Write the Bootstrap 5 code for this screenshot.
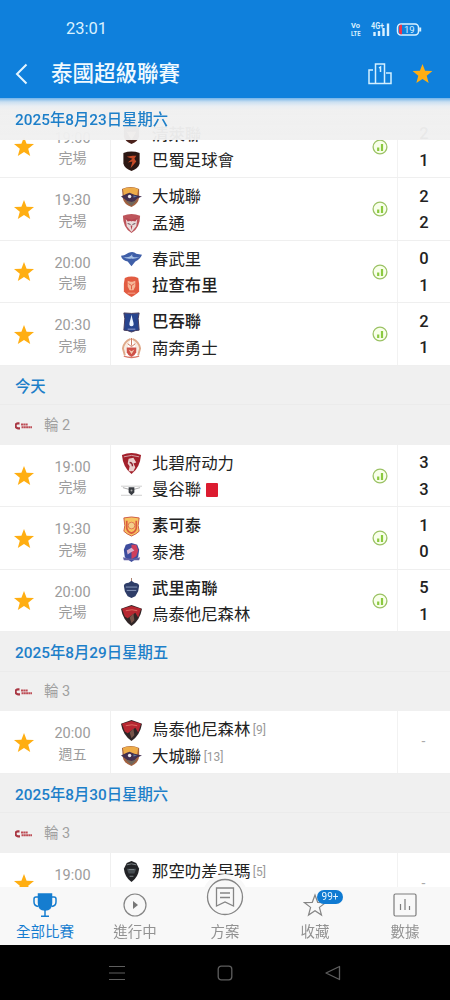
<!DOCTYPE html>
<html lang="zh-Hant">
<head>
    <meta charset="UTF-8">
    <meta name="viewport" content="width=device-width, initial-scale=1.0">
    <title>泰國超級聯賽</title>
    <link href="https://cdn.jsdelivr.net/npm/bootstrap@5.3.0/dist/css/bootstrap.min.css" rel="stylesheet">
    <style>
        body {
            font-family: Roboto, "Noto Sans CJK TC", sans-serif;
            background-color: #fff;
            color: #222;
        }
        svg { display: block; flex: none; }
        .app { height: 1000px; width: 450px; overflow: hidden; }
        .top-bar { height: 98px; background-color: #0f80dc; flex: none; }
        .status { height: 57px; padding: 2px 28px 0 66px; font-size: 16.5px; color: #d9f1ff; }
        .title-row { height: 33px; padding: 0 17px 0 15px; }
        .title-row h1 { font-size: 21.5px; font-weight: 500; line-height: 32px; margin: 0 auto 0 23px; color: #f1faff; }
        .podium { margin-right: 20px; }
        .matches { flex: 1 1 0; min-height: 0; overflow: hidden; }
        .day { height: 39.5px; line-height: 38.5px; padding: 2px 0 0 15px; font-size: 15.35px; font-weight: 500; color: #1d7fc9; background-color: #f0f0f0; border-bottom: 1px solid #ebebeb; }
        .day.pinned { top: 0; z-index: 2; height: 42px; line-height: 41px; border: 0;
            background: linear-gradient(#73b3e9 0, #cbe0f1 4px, #e9eef3 8px, #f0f0f0f8 12px, #f0f0f0f5 100%); }
        .round { height: 39.5px; padding: 2px 0 0 15px; font-size: 14.5px; color: #a0a0a0; background-color: #f0f0f0; }
        .match { height: 62.5px; border-bottom: 1px solid #efefef; background-color: #fff; }
        .pinned + .match { margin-top: -24.5px; }
        .fav { width: 48px; padding-top: 2px; }
        .kickoff { width: 63px; padding: 12px 13px 0 0; border-right: 1px solid #f0f0f0; font-size: 14.5px; line-height: 21px; color: #9c9c9c; text-align: center; white-space: nowrap; }
        .kickoff span { display: block; height: 20.5px; }
        .kickoff span + span { font-size: 14px; line-height: 20px; }
        .teams { padding: 6px 0 0 9.5px; font-size: 16.4px; }
        .team { height: 26.5px; line-height: 26px; gap: 10.5px; white-space: nowrap; }
        .team b { font-weight: 500; }
        .rank { font-size: 12px; color: #999; margin-left: -8px; }
        .red-card { width: 12px; height: 14px; background-color: #dc1c30; border-radius: 1px; margin-left: -5.5px; }
        .stat { width: 34px; padding-top: 1px; }
        .score { width: 53px; border-left: 1px solid #f2f2f2; font-size: 16.5px; font-weight: 500; line-height: 26.5px; text-align: center; padding-top: 5.5px; }
        .score.none { color: #aaa; font-weight: 400; font-size: 14px; line-height: 8px; padding-top: 26px; padding-right: 1px; }
        .tabs { height: 58px; background-color: #f8f8f8; font-size: 14.5px; color: #929292; z-index: 3; flex: none; }
        .tab { padding-top: 6px; line-height: 20px; }
        .tab svg { margin-bottom: 6px; }
        .tab.current { color: #157dd0; }
        .tab-plan { margin-top: -14px; padding-top: 0; }
        .tab-plan svg { margin-bottom: 2px; }
        .count { left: 47px; top: 3px; width: 26px; height: 14px; line-height: 14px; font-size: 10px; border-radius: 7px; background-color: #0f7ad2; color: #e9f6ff; }
        .sys-nav { height: 55px; background-color: #000; padding: 0 109px; flex: none; }
    </style>
</head>
<body>

    <svg width="0" height="0" class="position-absolute">
        <symbol id="star" viewBox="0 0 20 20"><path fill="#ffae12" d="M10 0l2.600 6.800 7.400.300-5.800 4.600 2 7.300L10 14.900 3.800 19l2-7.300L0 7.100l7.400-.3z"/></symbol>
        <symbol id="stat" viewBox="0 0 16 16"><circle cx="8" cy="8" r="6.900" fill="#f8ffea" stroke="#9bc265" stroke-width="1.300"/><path d="M6.200 12V8.500M10 12V5" stroke="#8bc940" stroke-width="2.200"/></symbol>
        <symbol id="league" viewBox="0 0 17 8"><path d="M4.500 1.300H3a2.300 2.300 0 0 0 0 5h2" fill="none" stroke="#a93743" stroke-width="2.200"/><path d="M6 2.600h7M6.500 5.300H17" stroke="#bd4d56" stroke-width="2" stroke-dasharray="2 .3"/></symbol>

        <!-- club crests -->
        <symbol id="bashu" viewBox="0 0 22 22"><path d="M2.500 2q8.500-3 17 0v11q-1 5-8.500 8-7.500-3-8.500-8z" fill="#2c1713"/><path d="M16 5l-4 0-6 1 6 2-5 4 5-1-2 7 6-7-2-3z" fill="#c54a27"/></symbol>
        <symbol id="grey" viewBox="0 0 22 22"><path d="M3 2h16v11q-1 5-8 8-7-3-8-8z" fill="#4a211b"/><path d="M6 8h10l-5 9z" fill="#d5af91"/></symbol>
        <symbol id="ayutthaya" viewBox="0 0 22 22"><path d="M1 2q9-4 18 0v9q-1 7-8 10-8-3-9-9z" fill="#a4613f"/><path d="M2 2q8-3 16 0l-1 7H3z" fill="#eeac49"/><path d="M0 10l6-3 3-1 5 2 8 2-5 2-4 4-6-1z" fill="#433050"/><circle cx="9" cy="10" r="1.800" fill="#efe9ef"/><path d="M13 9l4 1-4 1z" fill="#567ca9"/><path d="M4 14l6 2 7-2-6 6z" fill="#70665b"/></symbol>
        <symbol id="muangthong" viewBox="0 0 22 22"><path d="M2 3q9-4 18 0 0 13-9 18Q2 16 2 3z" fill="#bd555b"/><path d="M5 6l6 3 6-3-1 8-5 6-5-6z" fill="#eadbdb"/><path d="M4 5l7 2 7-2-3 4-4-1-4 1zM10 13l1 5 1-5z" fill="#b64550"/><path d="M7 11l3 1M15 11l-3 1" stroke="#5e4451"/></symbol>
        <symbol id="chonburi" viewBox="0 0 22 22"><path d="M0 7q4 0 8-3 5-2 8 1l6 1q-2 5-7 7l-4 5-4-5Q1 12 0 7z" fill="#3f5fa8"/><path d="M2 8q7 2 10-3-2 5 8 3-6 3-9 2-5 1-9-2z" fill="#a9c2e5"/></symbol>
        <symbol id="ratchaburi" viewBox="0 0 22 22"><path d="M4 2q7-3 14 0l1 6v8q-2 3-8 6-6-3-8-6V8z" fill="#e25c42"/><path d="M7 5l3 1h2l3-1v6l-2 4H9l-2-4z" fill="#f6b798"/><path d="M8 8l3 2 3-2M11 10v4" stroke="#dd5c42" fill="none"/><path d="M7 18h8" stroke="#f4a78f"/></symbol>
        <symbol id="pathum" viewBox="0 0 22 22"><path d="M3 1q8 1 16 0l-1 6 1 12q-4 0-8 2-4-2-8-2L4 7z" fill="#27448e" stroke="#453a59"/><path d="M11 3q1 5 2 8 1 4-2 4t-2-4q1-3 2-8z" fill="#edf4ff"/><path d="M7 18h8" stroke="#8490c4" stroke-width="1.200"/></symbol>
        <symbol id="nakhonpathom" viewBox="0 0 22 22"><path d="M10 1Q3 4 2 11l2 7M12 1q7 3 8 10l-2 7" stroke="#dfa98a" stroke-width="2" fill="#f8ece2"/><path d="M11 0v8M7 6l4 3 4-3" stroke="#cb7358" fill="none"/><path d="M6 10h10v5q-1 3-5 5-4-2-5-5z" fill="#cf5148"/><path d="M8 12l3 2 3-2-3 5z" fill="#f5c9af"/><path d="M3 19q8 3 16 0" fill="none" stroke="#d97868" stroke-width="1.500"/></symbol>
        <symbol id="kanchanaburi" viewBox="0 0 22 22"><path d="M1 2q10-4 20 0-1 13-10 20Q2 15 1 2z" fill="#a3202b"/><path d="M3 4q8-3 16 0" stroke="#d6a7a9" fill="none"/><path d="M8 6l5-1 3 5-3 1 2 4-2 4H8l1-5-2-3z" fill="#ead0ce"/><path d="M9 10q3 0 3 4" stroke="#8d2330" fill="none" stroke-width="1.500"/></symbol>
        <symbol id="bangkok" viewBox="0 0 22 22"><path d="M0 6.500h22M0 16h22" stroke="#ccc"/><path d="M2 8l7 2h4l7-2" stroke="#aaa" fill="none"/><path d="M8 7.500h6V13l-3 3-3-3z" fill="#393c42"/><circle cx="11" cy="11" r="1" fill="#aaa"/></symbol>
        <symbol id="sukhothai" viewBox="0 0 22 22"><path d="M3 2q8-2 16 0l-1 8 1 6q-3 3-8 5-5-2-8-5l1-6z" fill="#f7c462" stroke="#ce5a42"/><path d="M6 5v8q1 4 5 5 4-1 5-5V5" stroke="#dc5b40" stroke-width="1.800" fill="none"/><circle cx="11" cy="10" r="3.500" fill="#f4cf8b" stroke="#df7650"/></symbol>
        <symbol id="port" viewBox="0 0 22 22"><path d="M5 3l6-2 6 2 2 5-1 8-7 5-7-5-1-8z" fill="#3d4c9d"/><path d="M11 3h5l2 6-2 6-5 3z" fill="#cf3f5c"/><path d="M6 9l5-3 3 3-4 2-3 2z" fill="#d8b2cb"/><path d="M2 16q9 3 18 0l-1 3H3z" fill="#6261a4"/></symbol>
        <symbol id="buriram" viewBox="0 0 22 22"><path d="M11 0v5" stroke="#a87c69"/><path d="M3 8q1-3 5-3l3-2 3 2q4 0 5 3l-1 6-3 5-4 2-4-2-3-5z" fill="#2e3d68"/><path d="M5 9.500h12M6 13h10" stroke="#8b9abd"/></symbol>
        <symbol id="uthai" viewBox="0 0 22 22"><path d="M0 4l11-4 11 4q-2 12-11 18Q2 16 0 4z" fill="#302526"/><path d="M1 4l10-3 10 3-3 9-3-5-8 6-3-2z" fill="#b62731"/><path d="M5 6q7-2 12 0" stroke="#dc6d63" fill="none"/><path d="M9 13l4-4 1 7-3 3z" fill="#765348"/></symbol>
        <symbol id="korat" viewBox="0 0 22 22"><path d="M6 2l5-2 5 2 3 6q-1 9-8 14Q4 17 3 8z" fill="#222326"/><path d="M6 8h10l-2 5H8z" fill="#464d52"/><path d="M8 9h6M6 4q5-2 10 0M9 16h4" stroke="#80888c" fill="none"/></symbol>
    </svg>

    <div class="app d-flex flex-column">
        <header class="top-bar">
            <div class="status d-flex align-items-center">
                <span class="me-auto">23:01</span>
                <svg width="72" height="18" viewBox="0 -1 72 18" fill="#d9f1ff" font-family="Roboto" font-weight="700">
                    <text x="1" y="6" font-size="6.500" textLength="9" lengthAdjust="spacingAndGlyphs">Vo</text>
                    <text x="1" y="14" font-size="6.500" textLength="9.500" lengthAdjust="spacingAndGlyphs">LTE</text>
                    <text x="21" y="6.500" font-size="8.500" textLength="13" lengthAdjust="spacingAndGlyphs">4G+</text>
                    <path d="M24.500 14v-4M29 14V9M33.500 14V6M38 14V1.500" stroke="#d9f1ff" stroke-width="2.400"/>
                    <rect x="47.500" y="2" width="21" height="11" rx="3.500" fill="none" stroke="#d9f1ff" stroke-width="1.500"/>
                    <path d="M49.500 4.500q0-1.500 2-1.500v9q-2 0-2-1.500z" fill="#ee3448" stroke="#ee3448"/>
                    <path d="M70.200 5.500v4" stroke="#d9f1ff" stroke-width="2"/>
                    <text x="54" y="11" font-size="9.500" font-weight="400">19</text>
                </svg>
            </div>
            <div class="title-row d-flex align-items-center">
                <svg width="13" height="22" viewBox="0 0 13 22"><path d="M11.500 1.500L2 11l9.500 9.500" fill="none" stroke="#e4f5ff" stroke-width="2"/></svg>
                <h1>泰國超級聯賽</h1>
                <svg class="podium" width="24" height="22" viewBox="0 0 24 22" fill="none" stroke="#d3efff" stroke-width="1.500"><path d="M5 7H1v13.500h22V10h-5M7.500 20.500V1h9v19.500M11 5l1.500-1v5"/></svg>
                <svg width="21" height="20" viewBox="0 0 20 20"><use href="#star"/></svg>
            </div>
        </header>

        <main class="matches">
            <div class="day pinned position-sticky">2025年8月23日星期六</div>
            <div class="match d-flex">
                <div class="fav d-flex justify-content-center align-items-center"><svg width="20" height="20"><use href="#star"/></svg></div>
                <div class="kickoff"><span>19:00</span><span>完場</span></div>
                <div class="teams flex-grow-1">
                    <div class="team d-flex align-items-center"><svg width="21" height="21"><use href="#grey"/></svg><b>清萊聯</b></div>
                    <div class="team d-flex align-items-center"><svg width="21" height="21"><use href="#bashu"/></svg><span>巴蜀足球會</span></div>
                </div>
                <div class="stat d-flex justify-content-center align-items-center"><svg width="16" height="16"><use href="#stat"/></svg></div>
                <div class="score">2<br>1</div>
            </div>
            <div class="match d-flex">
                <div class="fav d-flex justify-content-center align-items-center"><svg width="20" height="20"><use href="#star"/></svg></div>
                <div class="kickoff"><span>19:30</span><span>完場</span></div>
                <div class="teams flex-grow-1">
                    <div class="team d-flex align-items-center"><svg width="21" height="21"><use href="#ayutthaya"/></svg><span>大城聯</span></div>
                    <div class="team d-flex align-items-center"><svg width="21" height="21"><use href="#muangthong"/></svg><span>孟通</span></div>
                </div>
                <div class="stat d-flex justify-content-center align-items-center"><svg width="16" height="16"><use href="#stat"/></svg></div>
                <div class="score">2<br>2</div>
            </div>
            <div class="match d-flex">
                <div class="fav d-flex justify-content-center align-items-center"><svg width="20" height="20"><use href="#star"/></svg></div>
                <div class="kickoff"><span>20:00</span><span>完場</span></div>
                <div class="teams flex-grow-1">
                    <div class="team d-flex align-items-center"><svg width="21" height="21"><use href="#chonburi"/></svg><span>春武里</span></div>
                    <div class="team d-flex align-items-center"><svg width="21" height="21"><use href="#ratchaburi"/></svg><b>拉查布里</b></div>
                </div>
                <div class="stat d-flex justify-content-center align-items-center"><svg width="16" height="16"><use href="#stat"/></svg></div>
                <div class="score">0<br>1</div>
            </div>
            <div class="match d-flex">
                <div class="fav d-flex justify-content-center align-items-center"><svg width="20" height="20"><use href="#star"/></svg></div>
                <div class="kickoff"><span>20:30</span><span>完場</span></div>
                <div class="teams flex-grow-1">
                    <div class="team d-flex align-items-center"><svg width="21" height="21"><use href="#pathum"/></svg><b>巴吞聯</b></div>
                    <div class="team d-flex align-items-center"><svg width="21" height="21"><use href="#nakhonpathom"/></svg><span>南奔勇士</span></div>
                </div>
                <div class="stat d-flex justify-content-center align-items-center"><svg width="16" height="16"><use href="#stat"/></svg></div>
                <div class="score">2<br>1</div>
            </div>

            <div class="day">今天</div>
            <div class="round d-flex align-items-center"><svg width="17" height="8" class="me-2"><use href="#league"/></svg><span class="ms-1">輪 2</span></div>
            <div class="match d-flex">
                <div class="fav d-flex justify-content-center align-items-center"><svg width="20" height="20"><use href="#star"/></svg></div>
                <div class="kickoff"><span>19:00</span><span>完場</span></div>
                <div class="teams flex-grow-1">
                    <div class="team d-flex align-items-center"><svg width="21" height="21"><use href="#kanchanaburi"/></svg><span>北碧府动力</span></div>
                    <div class="team d-flex align-items-center"><svg width="21" height="21"><use href="#bangkok"/></svg><span>曼谷聯</span><i class="red-card"></i></div>
                </div>
                <div class="stat d-flex justify-content-center align-items-center"><svg width="16" height="16"><use href="#stat"/></svg></div>
                <div class="score">3<br>3</div>
            </div>
            <div class="match d-flex">
                <div class="fav d-flex justify-content-center align-items-center"><svg width="20" height="20"><use href="#star"/></svg></div>
                <div class="kickoff"><span>19:30</span><span>完場</span></div>
                <div class="teams flex-grow-1">
                    <div class="team d-flex align-items-center"><svg width="21" height="21"><use href="#sukhothai"/></svg><b>素可泰</b></div>
                    <div class="team d-flex align-items-center"><svg width="21" height="21"><use href="#port"/></svg><span>泰港</span></div>
                </div>
                <div class="stat d-flex justify-content-center align-items-center"><svg width="16" height="16"><use href="#stat"/></svg></div>
                <div class="score">1<br>0</div>
            </div>
            <div class="match d-flex">
                <div class="fav d-flex justify-content-center align-items-center"><svg width="20" height="20"><use href="#star"/></svg></div>
                <div class="kickoff"><span>20:00</span><span>完場</span></div>
                <div class="teams flex-grow-1">
                    <div class="team d-flex align-items-center"><svg width="21" height="21"><use href="#buriram"/></svg><b>武里南聯</b></div>
                    <div class="team d-flex align-items-center"><svg width="21" height="21"><use href="#uthai"/></svg><span>烏泰他尼森林</span></div>
                </div>
                <div class="stat d-flex justify-content-center align-items-center"><svg width="16" height="16"><use href="#stat"/></svg></div>
                <div class="score">5<br>1</div>
            </div>

            <div class="day">2025年8月29日星期五</div>
            <div class="round d-flex align-items-center"><svg width="17" height="8" class="me-2"><use href="#league"/></svg><span class="ms-1">輪 3</span></div>
            <div class="match d-flex">
                <div class="fav d-flex justify-content-center align-items-center"><svg width="20" height="20"><use href="#star"/></svg></div>
                <div class="kickoff"><span>20:00</span><span>週五</span></div>
                <div class="teams flex-grow-1">
                    <div class="team d-flex align-items-center"><svg width="21" height="21"><use href="#uthai"/></svg><span>烏泰他尼森林</span><span class="rank">[9]</span></div>
                    <div class="team d-flex align-items-center"><svg width="21" height="21"><use href="#ayutthaya"/></svg><span>大城聯</span><span class="rank">[13]</span></div>
                </div>
                <div class="score none">-</div>
            </div>

            <div class="day">2025年8月30日星期六</div>
            <div class="round d-flex align-items-center"><svg width="17" height="8" class="me-2"><use href="#league"/></svg><span class="ms-1">輪 3</span></div>
            <div class="match d-flex">
                <div class="fav d-flex justify-content-center align-items-center"><svg width="20" height="20"><use href="#star"/></svg></div>
                <div class="kickoff"><span>19:00</span></div>
                <div class="teams flex-grow-1">
                    <div class="team d-flex align-items-center"><svg width="21" height="21"><use href="#korat"/></svg><span>那空叻差早瑪</span><span class="rank">[5]</span></div>
                    <div class="team d-flex align-items-center"><svg width="21" height="21"><use href="#ratchaburi"/></svg></div>
                </div>
                <div class="score none">-</div>
            </div>
        </main>

        <nav class="tabs row g-0 text-center position-relative">
            <div class="col tab current d-flex flex-column align-items-center">
                <svg width="24" height="24" viewBox="0 0 24 24" fill="none" stroke="#157dd0" stroke-width="1.500"><path d="M5.500 1h13v9q0 7-6.500 7t-6.500-7z" fill="#157dd0"/><path d="M5 4H3Q1 4 1 6v3q0 4 4.500 4.500M19 4h2q2 0 2 2v3q0 4-4.500 4.500M12 17v6M8 23.200h8"/></svg>
                <span>全部比賽</span>
            </div>
            <div class="col tab d-flex flex-column align-items-center">
                <svg width="24" height="24" viewBox="0 0 24 24"><circle cx="12" cy="12" r="11" fill="none" stroke="#858585" stroke-width="1.200"/><path d="M10 8v8l5-4z" fill="#777"/></svg>
                <span>進行中</span>
            </div>
            <div class="col tab tab-plan d-flex flex-column align-items-center">
                <svg width="48" height="48" viewBox="0 0 48 48" fill="none" stroke="#858585" stroke-width="1.300"><circle cx="24" cy="24" r="23" fill="#f8f8f8" stroke="none"/><circle cx="24" cy="24" r="17.500"/><path d="M15.500 15h17v18l-8.500-4-8.500 4zM19 20h10M19 24.500h10"/></svg>
                <span>方案</span>
            </div>
            <div class="col tab d-flex flex-column align-items-center position-relative">
                <svg width="24" height="24" viewBox="0 0 24 24" fill="none" stroke="#858585" stroke-width="1.200"><path d="M12 2l2.700 7.300 7.800.300-6.100 4.800 2.100 7.600-6.500-4.300L5.500 22l2.100-7.600L1.500 9.600l7.800-.3z"/></svg>
                <span>收藏</span>
                <span class="count position-absolute">99+</span>
            </div>
            <div class="col tab d-flex flex-column align-items-center">
                <svg width="24" height="24" viewBox="0 0 24 24" fill="none" stroke="#7c7c7c" stroke-width="1.200"><rect x="1" y="1" width="22" height="22" rx="1.500"/><path d="M7.500 17v-6M12 17V6M16.500 17v-4"/></svg>
                <span>數據</span>
            </div>
        </nav>

        <div class="sys-nav d-flex justify-content-between align-items-center">
            <svg width="16" height="16" viewBox="0 0 16 16" stroke="#5e5e5e" stroke-width="1.200"><path d="M0 1.500h16M0 8h16M0 14.500h16"/></svg>
            <svg width="16" height="16" viewBox="0 0 16 16" fill="none" stroke="#5e5e5e" stroke-width="1.300"><rect x="1.200" y="1.200" width="13.600" height="13.600" rx="3"/></svg>
            <svg width="16" height="16" viewBox="0 0 16 16" fill="none" stroke="#5e5e5e" stroke-width="1.300"><path d="M14.500 1.500v13L1 8z" stroke-linejoin="round"/></svg>
        </div>
    </div>

    <script src="https://cdn.jsdelivr.net/npm/bootstrap@5.3.0/dist/js/bootstrap.bundle.min.js"></script>
</body>
</html>
